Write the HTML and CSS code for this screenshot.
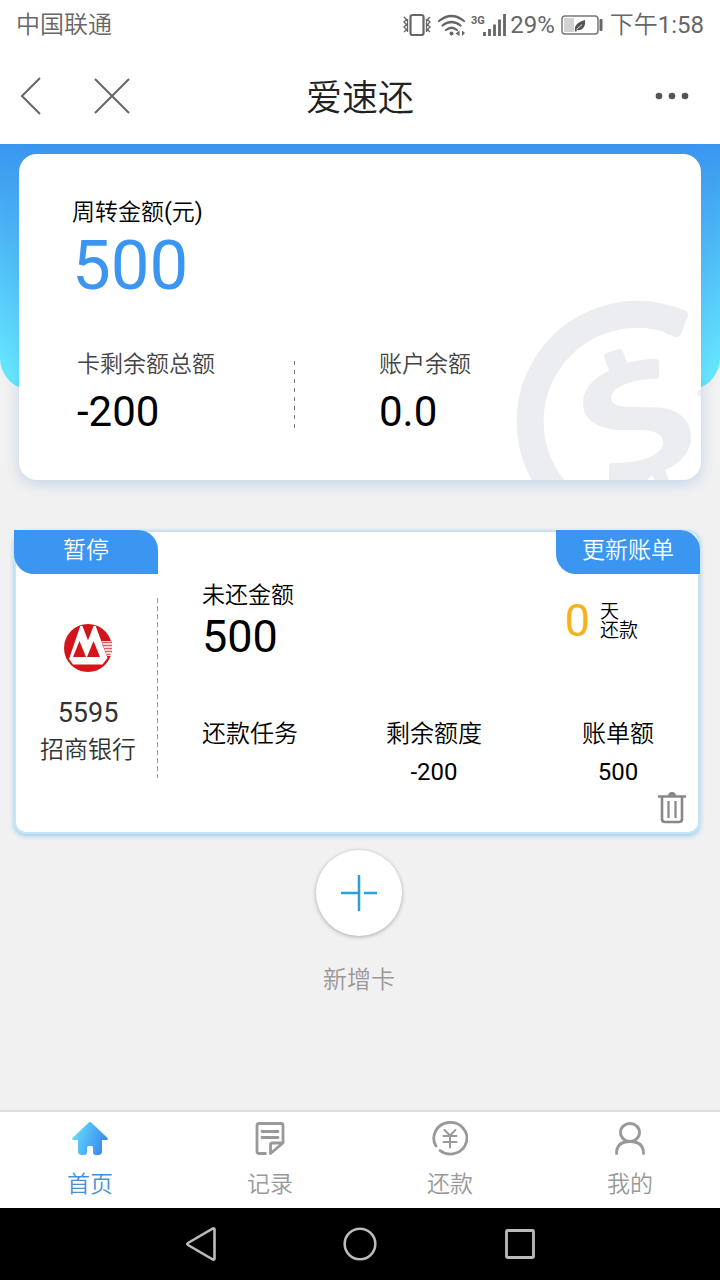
FILE: index.html
```html
<!DOCTYPE html>
<html lang="zh-CN">
<head>
<meta charset="utf-8">
<meta name="viewport" content="width=device-width, initial-scale=1">
<title>爱速还</title>
<link rel="stylesheet" href="styles.css">
</head>
<body>
<div class="status">
  <span class="carrier">中国联通</span>
  <div class="status-right">
    <svg width="104" height="30" viewBox="0 0 104 30" fill="none" stroke="#666" aria-hidden="true">
      <rect x="8.500" y="5" width="13" height="20" rx="2" stroke-width="2.200"/>
      <path d="M2 7l2.500 2.500L2 12l2.500 2.500L2 17l2.500 2.500L2 22M5.500 9v13M28 7l-2.500 2.500L28 12l-2.500 2.500L28 17l-2.500 2.500L28 22M24.500 9v13" stroke-width="1.300"/>
      <path d="M37 11q12.500-10 25 0M40.500 15.500q9-7 18 0M44 20q5.500-4.500 11 0" stroke-width="2.200" stroke-linecap="round"/>
      <circle cx="49.500" cy="23.500" r="2" fill="#666" stroke="none"/>
      <path d="M57.500 20.500v5.500l-4-2.500zM60 20.500v5.500l3-3z" fill="#666" stroke="none"/>
      <path d="M82.500 22v4M87.500 19v7M92.500 14.500v11.500M97.500 9.500v16.500M102.500 4v22" stroke-width="2.800"/>
      <text x="69" y="14" class="net">3G</text>
    </svg>
    <span>29%</span>
    <svg class="battery" width="42" height="22" viewBox="0 0 42 22" aria-hidden="true">
      <rect x="1" y="2" width="36" height="18" rx="3" fill="#fff" stroke="#777" stroke-width="1.500"/>
      <rect x="3" y="4" width="10" height="14" fill="#d2d2d2"/>
      <path d="M14 17c-1-7 4-9 10-11 1 6-2 11-8 10l-1 2z" fill="#555"/>
      <path d="M15.500 15.500l5.500-5" stroke="#fff" stroke-width=".8"/>
      <rect x="38.500" y="5" width="3" height="12" rx="1" fill="#666"/>
    </svg>
    <span>下午1:58</span>
  </div>
</div>
<header class="bar">
  <div class="bar-left">
    <button class="icon-btn" aria-label="返回"><svg width="22" height="40" viewBox="0 0 22 40"><path d="M20 2L2 20l18 18" fill="none" stroke="#666" stroke-width="2"/></svg></button>
    <button class="icon-btn" aria-label="关闭"><svg width="36" height="36" viewBox="0 0 36 36"><path d="M1 1l34 34M35 1L1 35" fill="none" stroke="#666" stroke-width="2"/></svg></button>
  </div>
  <h1 class="title">爱速还</h1>
  <button class="icon-btn more" aria-label="更多"><svg width="36" height="10" viewBox="0 0 36 10" fill="#555"><circle cx="5" cy="5" r="3.300"/><circle cx="18" cy="5" r="3.300"/><circle cx="31" cy="5" r="3.300"/></svg></button>
</header>
<main class="main">
  <section class="hero">
    <div class="summary">
      <svg class="mark" width="186" height="180" viewBox="515 300 186 180" aria-hidden="true">
        <path d="M555 490A107 107 0 0 1 679 323" fill="none" stroke="#ebedf1" stroke-width="27"/>
        <path d="M683 315l-6.500 17-8-3 6-17z" fill="#ebedf1" stroke="#ebedf1" stroke-width="10" stroke-linejoin="round"/>
        <path d="M604 356q0-2 3-3l11-4q4-1 5 3l4 11q14-4 29-4 3 0 3 2v15q0 3-3 3C630 379 611 387 611 399c1 7 11 8 22 8l24 .5c21 .5 34 12.500 34 29.500 0 14-9 26-26 33l4 11h-14l-3-6-5 5h-38v-14q0-3 3-3c28 0 51-7 51-21 0-9-11-12-25-12h-18c-22-1-37-10-37-27 0-14 10-25 26-32z" fill="#ebedf1"/>
        <circle cx="701" cy="393" r="3.500" fill="#ebedf1"/>
      </svg>
      <div class="label">周转金额(元)</div>
      <div class="total">500</div>
      <div class="pair">
        <div class="cell"><div class="label soft">卡剩余额总额</div><div class="amount">-200</div></div>
        <div class="cell second"><div class="label soft">账户余额</div><div class="amount">0.0</div></div>
      </div>
    </div>
  </section>
  <article class="card">
    <button class="tag tag-left">暂停</button>
    <button class="tag tag-right">更新账单</button>
    <div class="bank">
      <svg width="48" height="48" viewBox="0 0 48 48" role="img" aria-label="招商银行">
        <circle cx="24" cy="24" r="24" fill="#d3151b"/>
        <path d="M16.300 2h2.200L24 16.500 29.500 2h2.200L43.500 34l-5 6.500H9L5 35z" fill="#fff"/>
        <path d="M15.500 17l6.500 16H9zM29.500 17L36 33H23z" fill="#d3151b"/>
        <path d="M37.500 17H49v15h-6z" fill="#fff"/>
        <path d="M38 18.500h10M38.500 21.500h9.500M40 24.500h8M41 27.500h7M42.500 30.500h4" stroke="#e2595e" stroke-width="1.500"/>
      </svg>
      <div class="tail">5595</div>
      <div class="bank-name">招商银行</div>
    </div>
    <div class="detail">
      <div class="due">
        <div><div class="label">未还金额</div><div class="owed">500</div></div>
        <div class="days"><span class="count">0</span><span class="unit">天<br>还款</span></div>
      </div>
      <div class="stats">
        <div class="stat"><div>还款任务</div></div>
        <div class="stat"><div>剩余额度</div><div>-200</div></div>
        <div class="stat"><div>账单额</div><div>500</div></div>
      </div>
    </div>
    <button class="icon-btn trash" aria-label="删除"><svg width="28" height="32" viewBox="0 0 28 32" fill="none" stroke="#888"><path d="M0 4.500h28" stroke-width="2.500"/><path d="M11 4q0-3 3-3t3 3" stroke-width="2" fill="#888"/><path d="M4 5v22q0 3 3 3h14q3 0 3-3V5" stroke-width="2.600"/><path d="M10.500 9v17M17.500 9v17" stroke-width="2.200"/></svg></button>
  </article>
  <div class="add">
    <button class="add-btn" aria-labelledby="add-label"><svg width="38" height="38" viewBox="0 0 38 38" stroke="#2c9fe0" stroke-width="2.500"><path d="M1 19h18M24 19h13M19 1v36"/></svg></button>
    <div class="add-label" id="add-label">新增卡</div>
  </div>
</main>
<nav class="tabs">
  <a class="tab active" href="#"><svg width="36" height="36" viewBox="0 0 36 36"><defs><linearGradient id="home" x1="0" x2="1" y1="0" y2=".3"><stop offset=".1" stop-color="#66dcfb"/><stop offset="1" stop-color="#3b8df0"/></linearGradient></defs><path d="M16.500 1.700q1.500-1.400 3 0L35.500 17q1 2-1 2H30v11q0 4-3.500 4h-3q-2.500 0-2.500-3v-4q0-2-1.500-2h-3q-1.500 0-1.500 2v4q0 3-2.500 3h-3Q6 34 6 30V19H1.500q-2 0-1-2z" fill="url(#home)"/></svg><span>首页</span></a>
  <a class="tab" href="#"><svg width="36" height="36" viewBox="0 0 36 36" fill="none" stroke="#999" stroke-width="2.800" stroke-linecap="round" stroke-linejoin="round"><path d="M14.500 32.500H7q-2 0-2-2V4.500q0-2 2-2h22q-2 0 0 0 2 0 2 2V22L18.500 32.500V24q0-2 2-2h10" stroke-linecap="butt"/><path d="M10 10.500h16M10 16.500h16"/></svg><span>记录</span></a>
  <a class="tab" href="#"><svg width="36" height="36" viewBox="0 0 36 36" fill="none" stroke="#999" stroke-linecap="round"><path d="M4 25A16.500 15.800 0 1 1 8 29.500" stroke-width="2.800"/><path d="M12.500 9l5.500 5.500L23.500 9M11.500 15h13M11.500 21h13M18 15v11.500" stroke-width="2"/></svg><span>还款</span></a>
  <a class="tab" href="#"><svg width="36" height="36" viewBox="0 0 36 36" fill="none" stroke="#999" stroke-width="2.800" stroke-linecap="round"><ellipse cx="18" cy="11.500" rx="9.500" ry="9"/><path d="M4.500 32.500q0-12 13.500-12t13.500 12"/></svg><span>我的</span></a>
</nav>
<div class="system">
  <button class="icon-btn" aria-label="系统返回"><svg width="36" height="36" viewBox="0 0 36 36"><path d="M32.500 3.500v29q0 1.500-1.500 1L6 19q-1.500-1 0-2L31 2.500q1.500-.5 1.500 1z" fill="none" stroke="#bbb" stroke-width="2.600"/></svg></button>
  <button class="icon-btn" aria-label="主屏幕"><svg width="36" height="36" viewBox="0 0 36 36"><circle cx="18" cy="18" r="15.300" fill="none" stroke="#bbb" stroke-width="2.600"/></svg></button>
  <button class="icon-btn" aria-label="最近任务"><svg width="36" height="36" viewBox="0 0 36 36"><rect x="4.500" y="4.500" width="27" height="27" rx="1" fill="none" stroke="#bbb" stroke-width="2.800"/></svg></button>
</div>
</body>
</html>
```
FILE: styles.css
```css
* { box-sizing: border-box; }
body {
  margin: 0;
  min-height: 100vh;
  display: flex;
  flex-direction: column;
  background: #fff;
  color: #000;
  font-family: Roboto, "Noto Sans CJK SC DemiLight", "Noto Sans CJK SC Light", "Noto Sans CJK SC", sans-serif;
  font-size: 24px;
}
button { font: inherit; border: 0; padding: 0; background: none; color: inherit; cursor: pointer; }
svg { display: block; }
.icon-btn { display: flex; }

.status {
  display: flex;
  justify-content: space-between;
  align-items: center;
  height: 50px;
  padding: 0 16px;
  color: #666;
  line-height: 50px;
}
.status-right { display: flex; align-items: center; gap: 4px; }
.net { font: bold 11px Roboto, sans-serif; fill: #666; stroke: none; }
.battery { margin: 0 3px 0 2px; }

.bar {
  display: grid;
  grid-template-columns: 1fr auto 1fr;
  align-items: center;
  height: 94px;
  padding: 0 20px 2px;
}
.bar-left { display: flex; align-items: center; gap: 52px; }
.title { margin: 0; padding-top: 6px; font-size: 36px; font-weight: 400; line-height: 48px; color: #222; }
.more { justify-self: end; margin-right: 10px; }

.main { flex: 1; background: #f1f1f1; }
.hero { position: relative; padding: 10px 19px 0; }
.hero::before {
  content: "";
  position: absolute;
  inset: 0 0 90px;
  border-radius: 0 0 32px 32px;
  background: linear-gradient(#3a96f0, #66e8ff 94%, #62e0ee);
}
.summary {
  position: relative;
  overflow: hidden;
  padding: 41px 54px 41px 53px;
  border-radius: 18px;
  background: #fff;
  box-shadow: 0 4px 14px rgba(90, 150, 220, .3);
}
.mark { position: absolute; right: 0; bottom: 0; }
.label { font-size: 23px; line-height: 36px; }
.soft { color: #444; }
.total { font-size: 69px; line-height: 70px; color: #3a96f0; }
.pair { display: flex; margin-top: 46px; padding-left: 5px; }
.cell { flex: 0 0 217px; }
.second {
  padding-left: 85px;
  background: repeating-linear-gradient(#777 0 4px, transparent 4px 9px) left 14px / 1px 69px no-repeat;
}
.amount { font-size: 42px; line-height: 58px; margin-bottom: -2px; }

.card {
  position: relative;
  display: flex;
  margin: 50px 20px 0 14px;
  padding-top: 46px;
  height: 304px;
  border: 2px solid #c6e4f6;
  border-radius: 12px;
  background: #fff;
  box-shadow: 0 2px 5px rgba(90, 180, 235, .6);
}
.tag {
  position: absolute;
  top: -2px;
  width: 144px;
  height: 44px;
  padding-bottom: 2px;
  background: #3a96f0;
  color: #fff;
  font-size: 23px;
  line-height: 42px;
  border-radius: 0 20px 0 20px;
}
.tag-left { left: -2px; }
.tag-right { right: -2px; }
.bank {
  display: flex;
  flex-direction: column;
  align-items: center;
  width: 142px;
  height: 202px;
  padding: 46px 0 0 2px;
  color: #333;
  background: repeating-linear-gradient(#4fb0cf 0 5px, transparent 5px 8px) right 20px / 1px 180px no-repeat;
}
.tail { margin-top: 23px; font-size: 27px; line-height: 36px; }
.bank-name { line-height: 38px; }
.detail { flex: 1; padding: 0 32px 0 44px; }
.due { display: flex; justify-content: space-between; }
.owed { font-size: 45px; line-height: 46px; }
.days { display: flex; align-items: center; gap: 10px; padding: 4px 28px 0 0; }
.count { font-size: 45px; color: #f5b21a; line-height: 52px; }
.unit { font-size: 19px; line-height: 19px; }
.stats { display: grid; grid-template-columns: 1fr 1fr 1fr; gap: 88px; margin-top: 55px; }
.stat { text-align: center; line-height: 38px; white-space: nowrap; }
.trash { position: absolute; right: 12px; bottom: 8px; }

.add { display: flex; flex-direction: column; align-items: center; margin-top: 16px; padding-right: 2px; }
.add-btn {
  display: grid;
  place-items: center;
  width: 86px;
  height: 86px;
  border-radius: 50%;
  background: #fff;
  box-shadow: 0 1px 4px rgba(0, 0, 0, .3);
}
.add-label { margin-top: 25px; line-height: 38px; color: #999; }

.tabs { display: grid; grid-template-columns: repeat(4, 1fr); border-top: 2px solid #ddd; background: #fff; }
.tab {
  display: flex;
  flex-direction: column;
  align-items: center;
  gap: 10px;
  height: 96px;
  padding-top: 9px;
  color: #999;
  font-size: 23px;
  line-height: 36px;
  text-decoration: none;
}
.active { color: #4a90d9; }
.system { display: flex; justify-content: center; align-items: center; gap: 124px; height: 72px; background: #000; }
```
